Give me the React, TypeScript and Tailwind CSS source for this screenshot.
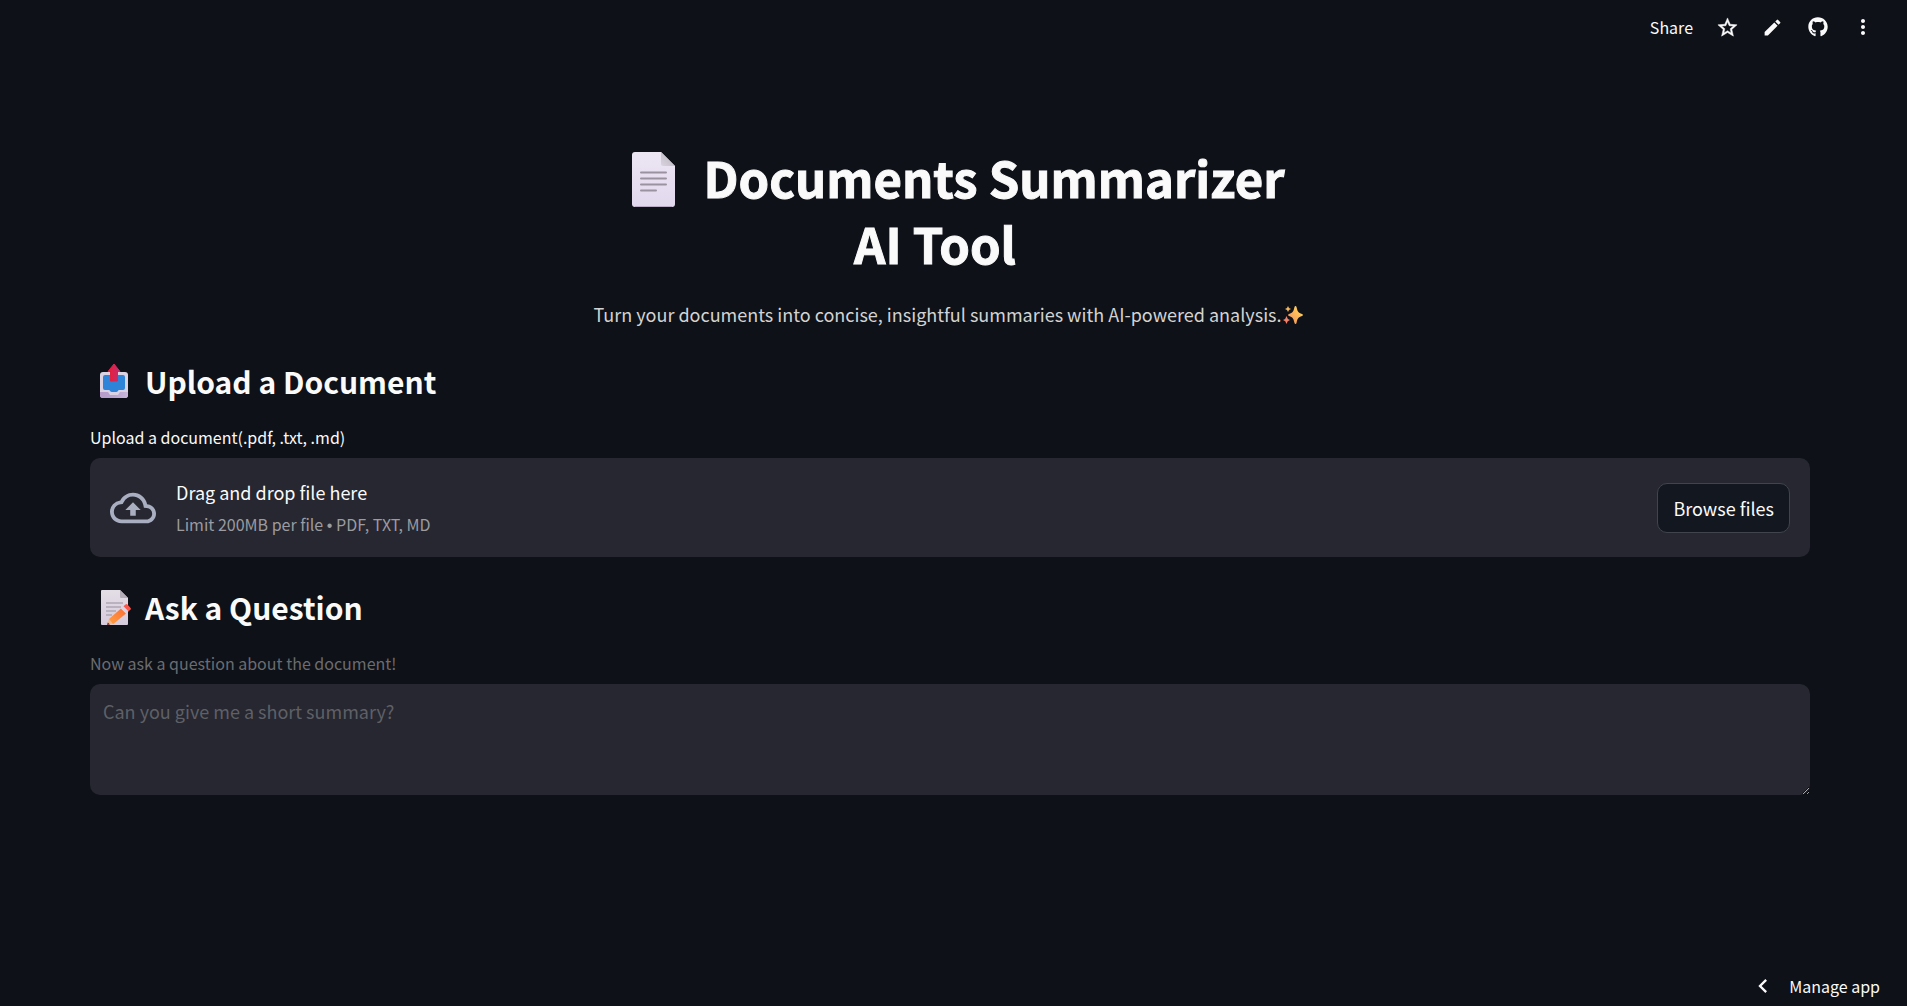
import { MdChevronLeft, MdEdit, MdMoreVert, MdOutlineCloudUpload, MdStarOutline } from "react-icons/md";
import { FaGithub } from "react-icons/fa";

function PageIcon() {
  return (
    <svg viewBox="0 0 43 55" className="mr-[29px] ml-[46px] inline-block h-[55px] w-[43px] align-[-9px]" aria-hidden="true">
      <defs>
        <linearGradient id="page" x1="0" y1="0" x2="0" y2="1">
          <stop offset="0" stopColor="#ece6f3" />
          <stop offset="1" stopColor="#e2d8ee" />
        </linearGradient>
        <linearGradient id="fold" x1="1" y1="0" x2="0" y2="1">
          <stop offset="0" stopColor="#b5b0ba" />
          <stop offset="1" stopColor="#d9d4dd" />
        </linearGradient>
      </defs>
      <path d="M3 0H29L43 14V52a3 3 0 0 1-3 3H3a3 3 0 0 1-3-3V3a3 3 0 0 1 3-3Z" fill="url(#page)" />
      <path d="M3 54.5H40" stroke="#b9aac6" />
      <path d="M29 0V12a2 2 0 0 0 2 2H43Z" fill="url(#fold)" />
      <path d="M9 20.5H34M9 26.5H34M9 32.5H34M9 38.5H24" stroke="#9a929f" strokeWidth="2" strokeLinecap="round" />
    </svg>
  );
}

function OutboxIcon() {
  return (
    <svg viewBox="0 0 28 34" className="h-[34px] w-[28px]" aria-hidden="true">
      <defs>
        <linearGradient id="arrow" x1="0" y1="0" x2="1" y2="0">
          <stop offset="0.2" stopColor="#e3203f" />
          <stop offset="1" stopColor="#c42d72" />
        </linearGradient>
        <linearGradient id="tray" x1="0" y1="0" x2="1" y2="0">
          <stop offset="0" stopColor="#b89bcb" />
          <stop offset="0.5" stopColor="#b9a4d0" />
          <stop offset="1" stopColor="#c9b7dc" />
        </linearGradient>
      </defs>
      <rect y="8" width="28" height="26" rx="3" fill="#dbd3e3" />
      <path d="M0 28H8L10 31H18L20 28H28V31a3 3 0 0 1-3 3H3a3 3 0 0 1-3-3Z" fill="url(#tray)" />
      <path d="M5 11H23a2 2 0 0 1 2 2V24a2 2 0 0 1-2 2H19c-1 0-1 2-3 2H12c-2 0-2-2-3-2H5a2 2 0 0 1-2-2V13a2 2 0 0 1 2-2Z" fill="#2d84d8" />
      <path d="M14 0 20 7.5H17.5V17H10.5V7.5H8Z" fill="url(#arrow)" stroke="url(#arrow)" strokeLinejoin="round" />
    </svg>
  );
}

function MemoIcon() {
  return (
    <svg viewBox="0 0 30 35" className="h-[35px] w-[30px]" aria-hidden="true">
      <defs>
        <linearGradient id="pencil" x1="0" y1="1" x2="1" y2="0">
          <stop offset="0" stopColor="#ffa042" />
          <stop offset="1" stopColor="#fb6d34" />
        </linearGradient>
        <linearGradient id="sheet" x1="0" y1="0" x2="0" y2="1">
          <stop offset="0" stopColor="#e3dee6" />
          <stop offset="1" stopColor="#d6cbdc" />
        </linearGradient>
      </defs>
      <path d="M1 0H19L27 8V34a1 1 0 0 1-1 1H1a1 1 0 0 1-1-1V1a1 1 0 0 1 1-1Z" fill="url(#sheet)" />
      <path d="M19 0V7a1 1 0 0 0 1 1H27Z" fill="#b3aeb8" />
      <path d="M5 13H22M5 17H20M5 21H15M5 25H11" stroke="#96909c" strokeWidth="1.2" />
      <path d="M6 35 8 29 12 34Z" fill="#f3b98b" />
      <path d="M6 35 6.8 32.5 9 34.6Z" fill="#6b2438" />
      <path d="M8 29 20 18.5 25 23.5 12 34.3Z" fill="url(#pencil)" />
      <path d="M20 18.5 22.5 16.3 27.5 21.3 25 23.5Z" fill="#d9d3e6" />
      <path d="M22.5 16.3 24.5 14.5Q25.5 13.6 26.5 14.5L29.6 18Q30.3 19 29.4 19.7L27.5 21.3Z" fill="#f8594e" />
    </svg>
  );
}

function SparklesIcon() {
  return (
    <svg viewBox="0 0 20 19" className="ml-px inline-block h-[19px] w-[20px] align-[-3px]" aria-hidden="true">
      <defs>
        <linearGradient id="spark" x1="1" y1="0" x2="0" y2="1">
          <stop offset="0.2" stopColor="#ffcf58" />
          <stop offset="1" stopColor="#f08a5f" />
        </linearGradient>
      </defs>
      <path d="M12.5 0C13 0 13.3.4 13.5 1 14.6 5.8 15.2 6.6 19 8 20.3 8.5 20.3 9.5 19 10 15.2 11.4 14.6 12.2 13.5 17 13.2 18.3 11.8 18.3 11.5 17 10.4 12.2 9.8 11.4 6 10 4.7 9.5 4.7 8.5 6 8 9.8 6.6 10.4 5.8 11.5 1 11.7.4 12 0 12.5 0Z" fill="url(#spark)" />
      <path d="M5 0Q5.5 2.5 8 3 5.5 3.5 5 6 4.5 3.5 2 3 4.5 2.5 5 0Z" fill="#f5b95c" />
      <path d="M3.5 10Q4.2 13.3 7 14 4.2 14.7 3.5 18 2.8 14.7 0 14 2.8 13.3 3.5 10Z" fill="#f2836b" />
    </svg>
  );
}

const headerActions = [
  { label: "Favorite", icon: <MdStarOutline size={23} stroke="currentColor" strokeWidth={0.5} /> },
  { label: "Edit source", icon: <MdEdit size={21} /> },
  { label: "View on GitHub", icon: <FaGithub size={20} /> },
  { label: "More options", icon: <MdMoreVert size={24} /> },
];

export default function App() {
  return (
    <div className="flex min-h-screen flex-col bg-[#0e1117] font-['Noto_Sans_CJK_SC','Noto_Sans',sans-serif] text-[#fafafa]">
      <header className="flex h-[54px] items-center justify-end pr-[22px]">
        <button className="mr-3 text-base leading-6">Share</button>
        {headerActions.map(({ label, icon }) => (
          <button key={label} aria-label={label} className="flex h-10 w-[45px] items-center justify-center">
            {icon}
          </button>
        ))}
      </header>

      <main className="flex flex-1 flex-col pr-[97px] pl-[90px] pt-[90px]">
        <h1 className="mx-auto w-full max-w-[750px] pr-[30px] text-center text-[49px] leading-[66px] font-bold [-webkit-text-stroke:1px_#fafafa]">
          <PageIcon />
          Documents Summarizer AI Tool
        </h1>
        <p className="mt-[23px] pr-1 text-center text-lg leading-[30px] text-[#d3d3d3]">
          Turn your documents into concise, insightful summaries with AI-powered analysis.
          <SparklesIcon />
        </p>

        <section className="mt-[31px]">
          <h2 className="flex items-center gap-[17px] pl-[10px] text-[30px] leading-[42px] font-semibold">
            <OutboxIcon />
            Upload a Document
          </h2>
          <p id="upload-label" className="mt-5 text-base leading-[30px]">
            Upload a document(.pdf, .txt, .md)
          </p>
          <div
            aria-labelledby="upload-label"
            role="group"
            className="mt-[6px] flex items-center rounded-[10px] bg-[#262730] px-5 py-[18px]"
          >
            <MdOutlineCloudUpload size={46} className="mr-5 shrink-0 text-[#a9aec1]" />
            <div className="flex-1">
              <p className="text-lg leading-[33px]">Drag and drop file here</p>
              <p className="text-base leading-[30px] text-[#9b9ba0]">
                Limit 200MB per file <span className="font-['Liberation_Sans',sans-serif] leading-none">•</span> PDF, TXT, MD
              </p>
            </div>
            <button className="h-[50px] rounded-[10px] border border-[#41444c] bg-[#131720] px-[15px] text-lg leading-[30px]">
              Browse files
            </button>
          </div>
        </section>

        <section className="mt-[29px]">
          <h2 className="flex items-center gap-[14px] pl-[11px] text-[30px] leading-[42px] font-semibold">
            <MemoIcon />
            Ask a Question
          </h2>
          <label htmlFor="question" className="mt-5 block text-base leading-[30px] text-[#6b6c70]">
            Now ask a question about the document!
          </label>
          <textarea
            id="question"
            placeholder="Can you give me a short summary?"
            className="mt-[6px] block h-[111px] w-full resize-y rounded-[10px] bg-[#262730] px-[13px] py-3 text-lg leading-[30px] outline-none placeholder:text-[#5f6066]"
          />
        </section>
      </main>

      <footer className="flex h-10 items-center justify-end pr-[27px]">
        <button className="flex items-center gap-3 text-base leading-6">
          <MdChevronLeft size={28} />
          Manage app
        </button>
      </footer>
    </div>
  );
}
